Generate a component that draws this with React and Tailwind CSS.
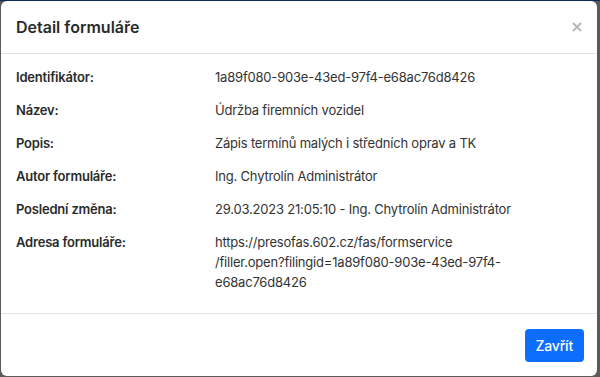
import React from 'react'

const rows = [
  { label: 'Identifikátor:', value: '1a89f080-903e-43ed-97f4-e68ac76d8426' },
  { label: 'Název:', value: 'Údržba firemních vozidel' },
  { label: 'Popis:', value: 'Zápis termínů malých i středních oprav a TK' },
  { label: 'Autor formuláře:', value: 'Ing. Chytrolín Administrátor' },
  { label: 'Poslední změna:', value: '29.03.2023 21:05:10 - Ing. Chytrolín Administrátor' },
  {
    label: 'Adresa formuláře:',
    value: ['https://presofas.602.cz/fas/formservice', '/filler.open?filingid=1a89f080-903e-43ed-97f4-', 'e68ac76d8426'],
  },
]

export default function App() {
  return (
    <div
      className="h-[377px] w-[600px] bg-[#5a5a5a] border-t border-[#0c2a5c] pl-[1px] pr-[3px] pb-[1px] text-[#212529]"
      style={{ fontFamily: 'Inter, "Noto Sans", sans-serif' }}
    >
      <div className="h-full bg-white rounded-[6px] flex flex-col">
        {/* Header */}
        <div className="h-[53px] flex items-center justify-between pl-[15px] pr-[14px] border-b border-[#dee2e6]">
          <h1 className="text-[16px] font-semibold text-[#2b2b2b]">Detail formuláře</h1>
          <button className="text-[#b5b5b5] w-[12px] h-[12px] flex items-center justify-center">
            <svg width="10" height="10" viewBox="0 0 10 10" stroke="currentColor" strokeWidth="1.8">
              <path d="M1 1L9 9M9 1L1 9" />
            </svg>
          </button>
        </div>

        {/* Body */}
        <div className="flex-1 flex flex-col gap-[13px] pt-[13px] pl-[15px] pr-[16px] text-[13px] leading-[20px] tracking-[-0.2px]">
          {rows.map((row) => (
            <div key={row.label} className="flex">
              <div className="w-[199px] shrink-0 font-semibold text-[#2b2b2b]">{row.label}</div>
              <div className="text-[#333]">
                {Array.isArray(row.value) ? row.value.map((l) => <div key={l}>{l}</div>) : row.value}
              </div>
            </div>
          ))}
        </div>

        {/* Footer */}
        <div className="h-[63px] border-t border-[#dee2e6] flex items-start justify-end pt-[15px] pr-[13px]">
          <button className="h-[33px] px-[11px] rounded-[4px] bg-[#0d6efd] text-white text-[14px] font-medium tracking-[-0.2px]">
            Zavřít
          </button>
        </div>
      </div>
    </div>
  )
}
